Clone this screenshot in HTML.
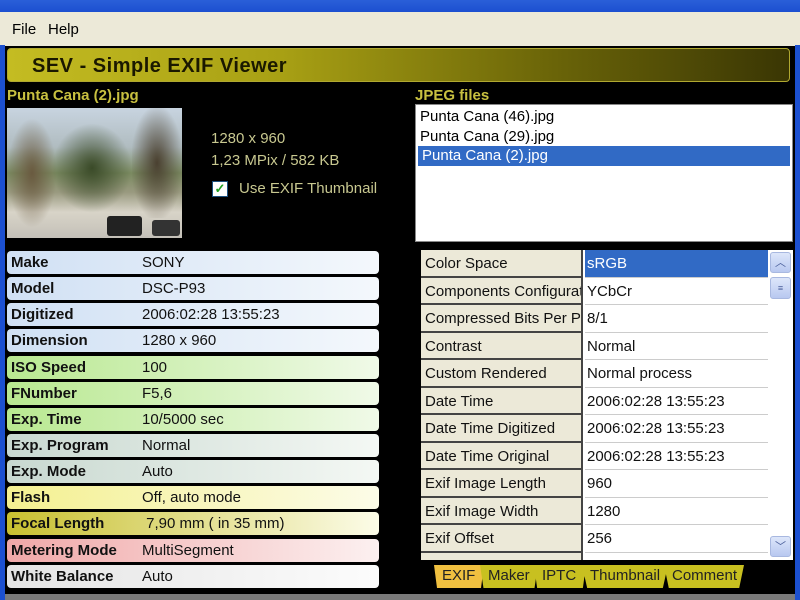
<!DOCTYPE html>
<html><head><meta charset="utf-8"><style>
*{margin:0;padding:0;box-sizing:border-box}
body{width:800px;height:600px;overflow:hidden;background:#000;font-family:"Liberation Sans",sans-serif;position:relative}
.a{position:absolute}
.title{left:0;top:0;width:800px;height:12px;background:linear-gradient(#2a5fd8,#1c4fd0)}
.menu{left:0;top:12px;width:800px;height:34px;background:#ece9d8;font-size:15px;color:#000}
.menu span{position:absolute;top:9px}
.lb{left:0;top:45px;width:5px;height:555px;background:#1c50d0}
.rb{left:795px;top:45px;width:5px;height:555px;background:#1c50d0}
.banner{left:7px;top:48px;width:783px;height:34px;border-radius:4px;background:linear-gradient(90deg,#c4bc22 0%,#a8a014 35%,#6a6408 70%,#3a3604 100%);border:1px solid #b0a830}
.banner span{position:absolute;left:24px;top:6px;font-size:20px;font-weight:bold;color:#1a1800;letter-spacing:0.5px}
.yl{color:#c8c040;font-weight:bold;font-size:15px}
.info{color:#c8c890;font-size:15px}
.row{position:absolute;left:7px;width:372px;height:23px;border-radius:4px;font-size:15px;color:#111}
.row b{position:absolute;left:4px;top:3px}
.row i{position:absolute;left:135px;top:3px;font-style:normal;font-size:15px}
.list{left:415px;top:104px;width:378px;height:138px;background:#fff;border:1px solid #888;font-size:15px}
.list div{height:19.5px;padding-left:4px;line-height:19px}
.grid{left:421px;top:250px;width:372px;height:310px;background:#fff;overflow:hidden}
.gr{position:absolute;left:0;width:347px;height:27.5px;font-size:15px;color:#111}
.gr .k{position:absolute;left:0;top:0;width:162px;height:27.5px;background:#ece9d8;border-bottom:2px solid #444;border-right:2px solid #444;padding:5px 0 0 4px;white-space:nowrap;overflow:hidden}
.gr .v{position:absolute;left:164px;top:0;width:183px;height:27.5px;border-bottom:1px solid #ccc;padding:5px 0 0 2px}
.sb{left:768px;top:250px;width:25px;height:310px;background:#fff}
.btn{position:absolute;left:2px;width:21px;height:21px;border-radius:3px;background:linear-gradient(#dde6fa,#b8c8f0);border:1px solid #a8b8e0;color:#4a5e9a;font-size:11px;text-align:center;line-height:20px}
.tabs{left:434px;top:565px;height:24px}
.tab{position:absolute;top:0;height:23px;background:#c8c020;font-size:15px;color:#222;padding:2px 4px 0 8px;clip-path:polygon(0 0,100% 0,94% 100%,6% 100%)}
</style></head><body>
<div class="a title"></div>
<div class="a menu"><span style="left:12px">File</span><span style="left:48px">Help</span></div>
<div class="a lb"></div><div class="a rb"></div>
<div class="a banner"><span>SEV - Simple EXIF Viewer</span></div>
<div class="a yl" style="left:7px;top:87px">Punta Cana (2).jpg</div>
<div class="a" style="left:7px;top:108px;width:175px;height:130px;background:linear-gradient(180deg,#c8d4e0 0%,#b0bcc0 30%,#7a8a60 50%,#9a9a80 65%,#d8d4c8 80%,#c4c0b8 100%)">
<div class="a" style="left:0;top:10px;width:50px;height:110px;background:radial-gradient(#6a5a40,transparent 70%)"></div>
<div class="a" style="left:45px;top:15px;width:80px;height:90px;background:radial-gradient(#3a4a28,transparent 70%)"></div>
<div class="a" style="left:125px;top:0;width:50px;height:110px;background:radial-gradient(#4a4030,transparent 75%)"></div>
<div class="a" style="left:100px;top:108px;width:35px;height:20px;background:#222;border-radius:3px"></div>
<div class="a" style="left:145px;top:112px;width:28px;height:16px;background:#333;border-radius:3px"></div>
</div>
<div class="a info" style="left:211px;top:130px">1280 x 960</div>
<div class="a info" style="left:211px;top:152px">1,23 MPix / 582 KB</div>
<div class="a" style="left:212px;top:181px;width:16px;height:16px;background:#fff;border:1px solid #1c5180;color:#21a121;font-size:13px;line-height:14px;text-align:center;font-weight:bold">✓</div>
<div class="a info" style="left:239px;top:180px">Use EXIF Thumbnail</div>

<div class="row" style="top:251px;background:linear-gradient(90deg,#d0e0f4,#f4f8fc)"><b>Make</b><i>SONY</i></div>
<div class="row" style="top:277px;background:linear-gradient(90deg,#d0e0f4,#f4f8fc)"><b>Model</b><i>DSC-P93</i></div>
<div class="row" style="top:303px;background:linear-gradient(90deg,#d0e0f4,#f4f8fc)"><b>Digitized</b><i>2006:02:28 13:55:23</i></div>
<div class="row" style="top:329px;background:linear-gradient(90deg,#d0e0f4,#f4f8fc)"><b>Dimension</b><i>1280 x 960</i></div>
<div class="row" style="top:356px;background:linear-gradient(90deg,#b8e890,#f0fae8)"><b>ISO Speed</b><i>100</i></div>
<div class="row" style="top:382px;background:linear-gradient(90deg,#b8e890,#f0fae8)"><b>FNumber</b><i>F5,6</i></div>
<div class="row" style="top:408px;background:linear-gradient(90deg,#b8e890,#f0fae8)"><b>Exp. Time</b><i>10/5000 sec</i></div>
<div class="row" style="top:434px;background:linear-gradient(90deg,#c8d8d0,#f4f8f4)"><b>Exp. Program</b><i>Normal</i></div>
<div class="row" style="top:460px;background:linear-gradient(90deg,#c8d8d0,#f4f8f4)"><b>Exp. Mode</b><i>Auto</i></div>
<div class="row" style="top:486px;background:linear-gradient(90deg,#f4f090,#fcfce8)"><b>Flash</b><i>Off, auto mode</i></div>
<div class="row" style="top:512px;background:linear-gradient(90deg,#c8c030,#fcfce8)"><b>Focal Length</b><i>&nbsp;7,90 mm ( in 35 mm)</i></div>
<div class="row" style="top:539px;background:linear-gradient(90deg,#f0a8a8,#fcf0f0)"><b>Metering Mode</b><i>MultiSegment</i></div>
<div class="row" style="top:565px;background:linear-gradient(90deg,#e4e4e4,#fcfcfc)"><b>White Balance</b><i>Auto</i></div>

<div class="a yl" style="left:415px;top:87px">JPEG files</div>
<div class="a list"><div style="margin-top:2px">Punta Cana (46).jpg</div><div>Punta Cana (29).jpg</div><div style="background:#316ac5;color:#fff;margin:0 2px">Punta Cana (2).jpg</div></div>

<div class="a grid">
<div class="gr" style="top:0"><div class="k">Color Space</div><div class="v" style="background:#316ac5;color:#fff">sRGB</div></div>
<div class="gr" style="top:27.5px"><div class="k">Components Configuration</div><div class="v">YCbCr</div></div>
<div class="gr" style="top:55px"><div class="k">Compressed Bits Per Pixel</div><div class="v">8/1</div></div>
<div class="gr" style="top:82.5px"><div class="k">Contrast</div><div class="v">Normal</div></div>
<div class="gr" style="top:110px"><div class="k">Custom Rendered</div><div class="v">Normal process</div></div>
<div class="gr" style="top:137.5px"><div class="k">Date Time</div><div class="v">2006:02:28 13:55:23</div></div>
<div class="gr" style="top:165px"><div class="k">Date Time Digitized</div><div class="v">2006:02:28 13:55:23</div></div>
<div class="gr" style="top:192.5px"><div class="k">Date Time Original</div><div class="v">2006:02:28 13:55:23</div></div>
<div class="gr" style="top:220px"><div class="k">Exif Image Length</div><div class="v">960</div></div>
<div class="gr" style="top:247.5px"><div class="k">Exif Image Width</div><div class="v">1280</div></div>
<div class="gr" style="top:275px"><div class="k">Exif Offset</div><div class="v">256</div></div>
<div class="gr" style="top:302.5px"><div class="k"></div><div class="v"></div></div>
</div>
<div class="a sb"><div class="btn" style="top:2px">︿</div><div class="btn" style="top:27px;height:22px;font-size:9px">≡</div><div class="btn" style="top:286px">﹀</div></div>

<div class="a tabs">
<div class="tab" style="left:0;width:50px;background:#f0c040">EXIF</div>
<div class="tab" style="left:46px;width:58px">Maker</div>
<div class="tab" style="left:100px;width:52px">IPTC</div>
<div class="tab" style="left:148px;width:86px">Thumbnail</div>
<div class="tab" style="left:230px;width:80px">Comment</div>
</div>
<div class="a" style="left:5px;top:594px;width:790px;height:6px;background:#7a7a7a"></div>
</body></html>
